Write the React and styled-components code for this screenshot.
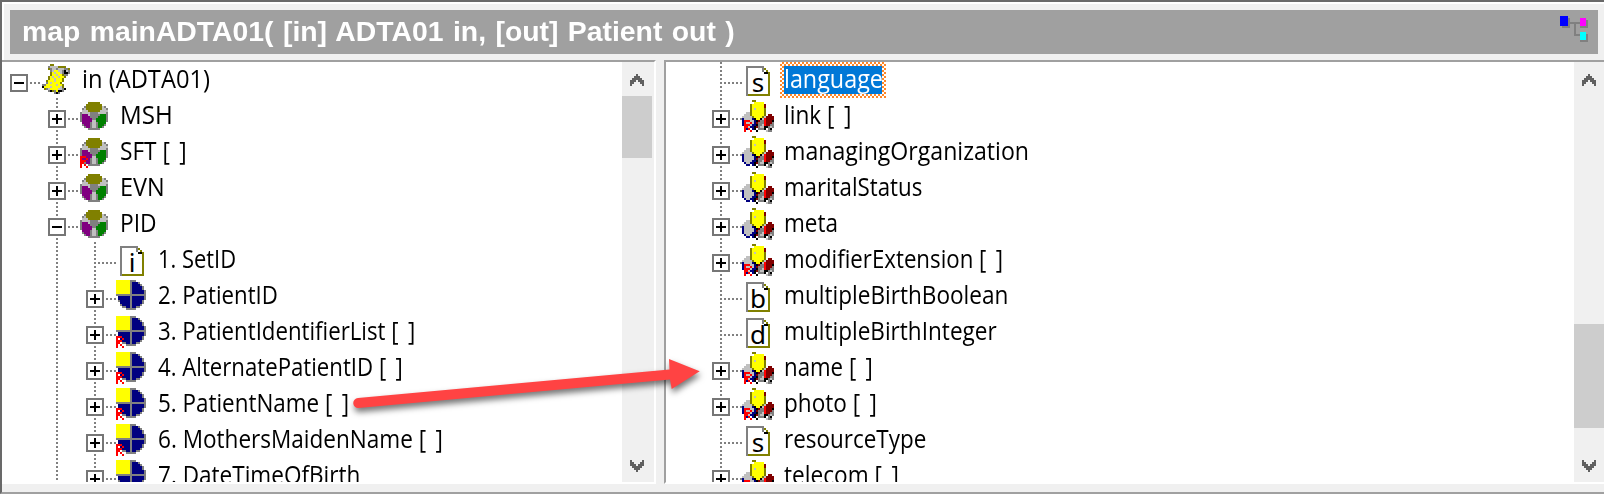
import React, { useLayoutEffect, useRef, useState } from "react";
import styled, { createGlobalStyle, css } from "styled-components";

const GlobalStyle = createGlobalStyle`
  * { box-sizing: border-box; }
  html, body { margin: 0; padding: 0; overflow: hidden; background: #f0f0f0; }
`;

const UNIT = 2;
const DOT = "#808080";

const PALETTE = {
  o: "#808000",
  y: "#ffff00",
  g: "#c0c0c0",
  d: "#808080",
  k: "#000000",
  w: "#ffffff",
  n: "#000080",
  e: "#008000",
  p: "#800080",
  m: "#800000",
  r: "#ff0000",
  s: "#606060",
};

const SCROLL = [
  "....oo........",
  "...dggggoooo..",
  "...odggdgggddo",
  "....dgyyggdkgd",
  "....oygyygdkkd",
  "....oyygyyodd.",
  "...oygyygyyo..",
  "...oyygyyyo...",
  "..oyyygyyyo...",
  "..dygyyyyo....",
  "ddyyyyygyyo...",
  "kyyygyyyygo...",
  ".odgyyyyggdk..",
  "...dkodykkd...",
  "......dkd.....",
];

const SEGMENT = [
  "....oooooo....",
  "...oooooooo...",
  "..doooooooogd.",
  ".dgooooooooggd",
  ".gggoooooogggg",
  "dggggddddggggd",
  "dpppgdddddeeed",
  "dppppddddeeeed",
  "dpppppddeeeeed",
  "dpppppggeeeeed",
  ".ppppdggdeeee.",
  ".dpppdggdeeed.",
  "..dppdggdeed..",
  "....dddddd....",
];

const FIELD = [
  "yyyyyyyddd.....",
  "yyyyyyydnnnd...",
  "yyyyyyydnnnnd..",
  "yyyyyyydnnnnnd.",
  "yyyyyyydnnnnnd.",
  "yyyyyyydnnnnnnd",
  "yyyyyyydnnnnnnd",
  "ddddddddddddddd",
  ".nnnnnndnnnnnnd",
  ".nnnnnndnnnnnnd",
  ".dnnnnndnnnnnd.",
  "..nnnnndnnnnnd.",
  "..dnnnndnnnnd..",
  "...ddnndnndd...",
  ".....ddddd.....",
];

const COMPLEX = [
  ".....oo.........",
  "......yyyyy.....",
  "....oyyyyyym....",
  "....oyyyyyym....",
  "....oygyyyyo....",
  "....oyyyyyyo....",
  "..ggoyyyyyyo....",
  ".gggoyyyyyyo.mm.",
  "gggggoyyyyogmmmm",
  "nggggnkyykgrmmmm",
  "ngggggnkmddrmmmk",
  "ngggggnmdddrmmmd",
  "nggggnnkddgrmmdd",
  ".nggnnkmdggkkdgd",
  "..nn.nk.dddk.dk.",
  ".......k....gdd.",
];

const SHEET = [
  "ddddddddd...",
  "dwwwwwwwdo..",
  "dwwwwwwwdwo.",
  "dwwwwwwwwkko",
  "dwwwwwwwwwwo",
  "dwwwwwwwwwwo",
  "dwwwwwwwwwwo",
  "dwwwwwwwwwwo",
  "dwwwwwwwwwwo",
  "dwwwwwwwwwwo",
  "dwwwwwwwwwwo",
  "dwwwwwwwwwwo",
  "dwwwwwwwwwwo",
  "dwwwwwwwwwwo",
  "dooooooooooo",
];

const REPEAT = ["rrr.", "r..r", "rrr.", "rr..", "r.r.", "r..r"];

const CHEVRON_UP = ["...s...", "..sss..", ".sssss.", "sss.sss", "ss...ss", "s.....s"];
const CHEVRON_DOWN = [...CHEVRON_UP].reverse();

function PixelArt({ map, ...rest }) {
  const w = map[0].length;
  const h = map.length;
  return (
    <svg width={w * UNIT} height={h * UNIT} viewBox={`0 0 ${w} ${h}`} shapeRendering="crispEdges" {...rest}>
      {map.flatMap((line, y) =>
        [...line].map((c, x) =>
          c === "." ? null : <rect key={`${x}-${y}`} x={x} y={y} width="1" height="1" fill={PALETTE[c]} />
        )
      )}
    </svg>
  );
}

const Window = styled.div`
  position: relative;
  display: flex;
  flex-direction: column;
  width: 1604px;
  height: 494px;
  background: #f0f0f0;
  border-top: 2px solid #696969;
  border-left: 2px solid #696969;
  border-bottom: 2px solid #a0a0a0;
  overflow: hidden;
`;

const TitleArea = styled.header`
  height: 58px;
  padding: 6px;
  border-top: 2px solid #fff;
  border-left: 2px solid #fff;
`;

const TitleBar = styled.div`
  display: flex;
  justify-content: space-between;
  height: 44px;
  padding: 6px 10px 0 12px;
  background: #a0a0a0;
`;

const Title = styled.h1`
  margin: 0;
  color: #fff;
  font: bold 28px/32px "Liberation Sans", Arial, sans-serif;
  word-spacing: 1.5px;
  white-space: pre;
`;

const Panes = styled.main`
  display: flex;
  gap: 8px;
  height: 424px;
`;

const Pane = styled.section`
  display: flex;
  flex: ${(p) => (p.$grow ? "1" : "none")};
  width: ${(p) => (p.$grow ? "auto" : "654px")};
  background: #fff;
  border-top: 2px solid #a0a0a0;
  ${(p) =>
    p.$grow
      ? css`
          border-left: 2px solid #a0a0a0;
        `
      : css`
          border-right: 2px solid #fff;
        `}
  border-bottom: 2px solid #fff;
  overflow: hidden;
`;

const Tree = styled.div`
  flex: 1;
  min-width: 0;
  padding-left: ${(p) => p.$indent}px;
  overflow: hidden;
`;

const Row = styled.div`
  display: flex;
  height: 36px;
`;

const dotsDown = `repeating-linear-gradient(to bottom, ${DOT} 0 2px, transparent 2px 4px)`;
const dotsAcross = `repeating-linear-gradient(to right, ${DOT} 0 2px, transparent 2px 4px)`;

const Guide = styled.span`
  flex: none;
  width: 38px;
  background: ${(p) => (p.$line ? `${dotsDown} 8px 0 / 2px 36px no-repeat` : "none")};
`;

const Branch = styled.span`
  flex: none;
  width: 30px;
  padding-top: 12px;
  background: ${dotsAcross} 8px 20px / 24px 2px no-repeat
    ${(p) => (p.$line ? `, ${dotsDown} 8px 0 / 2px 36px no-repeat` : "")};
`;

const Toggle = styled.span`
  display: block;
  width: 20px;
  height: 18px;
  background: #fff;
  svg {
    display: block;
  }
`;

const IconSlot = styled.span`
  position: relative;
  flex: none;
  width: 42px;
  padding: ${(p) => p.$top}px 0 0 ${(p) => p.$left}px;
  svg {
    display: block;
  }
`;

const RepeatMark = styled.span`
  position: absolute;
  left: ${(p) => p.$left}px;
  top: 22px;
`;

const SheetLetter = styled.span`
  position: absolute;
  left: 4px;
  top: 4px;
  width: 24px;
  text-align: center;
  color: #000;
  font: 26px/32px "Noto Sans", "Open Sans", sans-serif;
`;

const LabelBox = styled.span`
  flex: none;
  height: 36px;
  width: ${(p) => p.$width}px;
`;

const SelectedFrame = styled.span`
  height: 36px;
  width: 106px;
  margin-left: -4px;
  padding: 4px;
  background: repeating-conic-gradient(#ff8728 0 25%, #fff 0 50%) 0 0 / 4px 4px;
`;

const SelectedFill = styled.span`
  display: block;
  height: 28px;
  background: #0078d7;
`;

const LabelText = styled.span`
  display: inline-block;
  color: ${(p) => (p.$selected ? "#fff" : "#000")};
  font: 25px/33px "Open Sans", "Segoe UI", sans-serif;
  margin-top: ${(p) => (p.$selected ? "-4px" : "0")};
  white-space: pre;
`;

const Brackets = styled.span`
  word-spacing: 4px;
`;

const Scrollbar = styled.div`
  display: flex;
  flex-direction: column;
  flex: none;
  width: ${(p) => p.$width}px;
  background: #f0f0f0;
`;

const ScrollButton = styled.div`
  flex: none;
  height: 34px;
  padding: 12px 0 0 8px;
  svg {
    display: block;
  }
`;

const Thumb = styled.div`
  width: 30px;
  height: ${(p) => p.$size}px;
  margin-top: ${(p) => p.$offset}px;
  margin-bottom: auto;
  background: #cdcdcd;
`;

const ArrowOverlay = styled.svg`
  position: absolute;
  left: 336px;
  top: 346px;
  filter: drop-shadow(1px 4px 3px rgba(0, 0, 0, 0.55));
`;

function FittedText({ width, selected, as: Tag = LabelText, children }) {
  const ref = useRef(null);
  const [scale, setScale] = useState(1);
  useLayoutEffect(() => {
    setScale(width / ref.current.offsetWidth);
  }, [width]);
  return (
    <Tag ref={ref} $selected={selected} style={{ transform: `scaleX(${scale})`, transformOrigin: "0 0" }}>
      {children}
    </Tag>
  );
}

function ToggleBox({ open }) {
  return (
    <Toggle>
      <svg width="18" height="18" shapeRendering="crispEdges">
        <rect x="1" y="1" width="16" height="16" fill="#fff" stroke="#767676" strokeWidth="2" />
        <rect x="4" y="8" width="10" height="2" fill="#000" />
        {!open && <rect x="8" y="4" width="2" height="10" fill="#000" />}
      </svg>
    </Toggle>
  );
}

const ICONS = {
  root: { map: SCROLL, left: 2, top: 2 },
  segment: { map: SEGMENT, left: 2, top: 4, mark: 2 },
  field: { map: FIELD, left: 0, top: 2, mark: 0 },
  complex: { map: COMPLEX, left: 0, top: 2, mark: 2 },
  sheet: { map: SHEET, left: 4, top: 4 },
};

function TreeRow({ node }) {
  const { level = 0, kind, letter, label, width, open, repeat, lines = true } = node;
  const icon = ICONS[kind];
  return (
    <Row>
      {Array.from({ length: level }, (_, i) => (
        <Guide key={i} $line={i > 0} />
      ))}
      <Branch $line={lines}>{kind !== "sheet" && <ToggleBox open={open} />}</Branch>
      <IconSlot $left={icon.left} $top={icon.top}>
        <PixelArt map={icon.map} />
        {letter && <SheetLetter>{letter}</SheetLetter>}
        {repeat && (
          <RepeatMark $left={icon.mark}>
            <PixelArt map={REPEAT} />
          </RepeatMark>
        )}
      </IconSlot>
      {node.selected ? (
        <SelectedFrame>
          <SelectedFill>
            <FittedText width={width} selected>
              {label}
            </FittedText>
          </SelectedFill>
        </SelectedFrame>
      ) : (
        <LabelBox $width={width}>
          <FittedText width={width}>
            {label}
            {repeat && " "}
            {repeat && <Brackets>[ ]</Brackets>}
          </FittedText>
        </LabelBox>
      )}
    </Row>
  );
}

function Scroller({ width, offset, size }) {
  return (
    <Scrollbar $width={width}>
      <ScrollButton>
        <PixelArt map={CHEVRON_UP} />
      </ScrollButton>
      <Thumb $offset={offset} $size={size} />
      <ScrollButton>
        <PixelArt map={CHEVRON_DOWN} />
      </ScrollButton>
    </Scrollbar>
  );
}

const SOURCE = [
  { kind: "root", label: "in (ADTA01)", width: 128, open: true, lines: false },
  { level: 1, kind: "segment", label: "MSH", width: 53 },
  { level: 1, kind: "segment", label: "SFT", width: 67, repeat: true },
  { level: 1, kind: "segment", label: "EVN", width: 45 },
  { level: 1, kind: "segment", label: "PID", width: 36.5, open: true },
  { level: 2, kind: "sheet", letter: "i", label: "1. SetID", width: 78 },
  { level: 2, kind: "field", label: "2. PatientID", width: 120 },
  { level: 2, kind: "field", label: "3. PatientIdentifierList", width: 257, repeat: true },
  { level: 2, kind: "field", label: "4. AlternatePatientID", width: 245, repeat: true },
  { level: 2, kind: "field", label: "5. PatientName", width: 191, repeat: true },
  { level: 2, kind: "field", label: "6. MothersMaidenName", width: 285, repeat: true },
  { level: 2, kind: "field", label: "7. DateTimeOfBirth", width: 202 },
];

const TARGET = [
  { kind: "sheet", letter: "s", label: "language", width: 99, selected: true },
  { kind: "complex", label: "link", width: 67, repeat: true },
  { kind: "complex", label: "managingOrganization", width: 245 },
  { kind: "complex", label: "maritalStatus", width: 138 },
  { kind: "complex", label: "meta", width: 54 },
  { kind: "complex", label: "modifierExtension", width: 219, repeat: true },
  { kind: "sheet", letter: "b", label: "multipleBirthBoolean", width: 224 },
  { kind: "sheet", letter: "d", label: "multipleBirthInteger", width: 213 },
  { kind: "complex", label: "name", width: 89, repeat: true },
  { kind: "complex", label: "photo", width: 93, repeat: true },
  { kind: "sheet", letter: "s", label: "resourceType", width: 142 },
  { kind: "complex", label: "telecom", width: 115, repeat: true },
];

function MappingGlyph() {
  return (
    <svg width="28" height="26" shapeRendering="crispEdges">
      <path d="M10 6h10v2h-4v10h4v2h-6V8h-4z" fill="#808080" />
      <path d="M2 2h8v10H2zM22 4h6v8h-8v-2h2zM22 18h6v8h-8v-2h2z" fill="#808080" />
      <rect width="8" height="10" fill="#0000ff" />
      <rect x="20" y="2" width="6" height="8" fill="#ff00ff" />
      <rect x="20" y="16" width="6" height="8" fill="#00ffff" />
    </svg>
  );
}

export default function App() {
  return (
    <>
      <GlobalStyle />
      <Window>
        <TitleArea>
          <TitleBar>
            <FittedText as={Title} width={713}>
              {"map mainADTA01( [in] ADTA01 in, [out] Patient out )"}
            </FittedText>
            <MappingGlyph />
          </TitleBar>
        </TitleArea>
        <Panes>
          <Pane>
            <Tree $indent={8}>
              {SOURCE.map((n) => (
                <TreeRow key={n.label} node={n} />
              ))}
            </Tree>
            <Scroller width={32} offset={0} size={62} />
          </Pane>
          <Pane $grow>
            <Tree $indent={46}>
              {TARGET.map((n) => (
                <TreeRow key={n.label} node={n} />
              ))}
            </Tree>
            <Scroller width={30} offset={228} size={104} />
          </Pane>
        </Panes>
        <ArrowOverlay width="370" height="72">
          <path
            d="M20.5 60 L332 31.5 L333.7 41 L361.7 23.3 L331 11 L331.5 21.5 L20 50 A5 5 0 0 0 20.5 60Z"
            fill="#ff4343"
          />
        </ArrowOverlay>
      </Window>
    </>
  );
}
